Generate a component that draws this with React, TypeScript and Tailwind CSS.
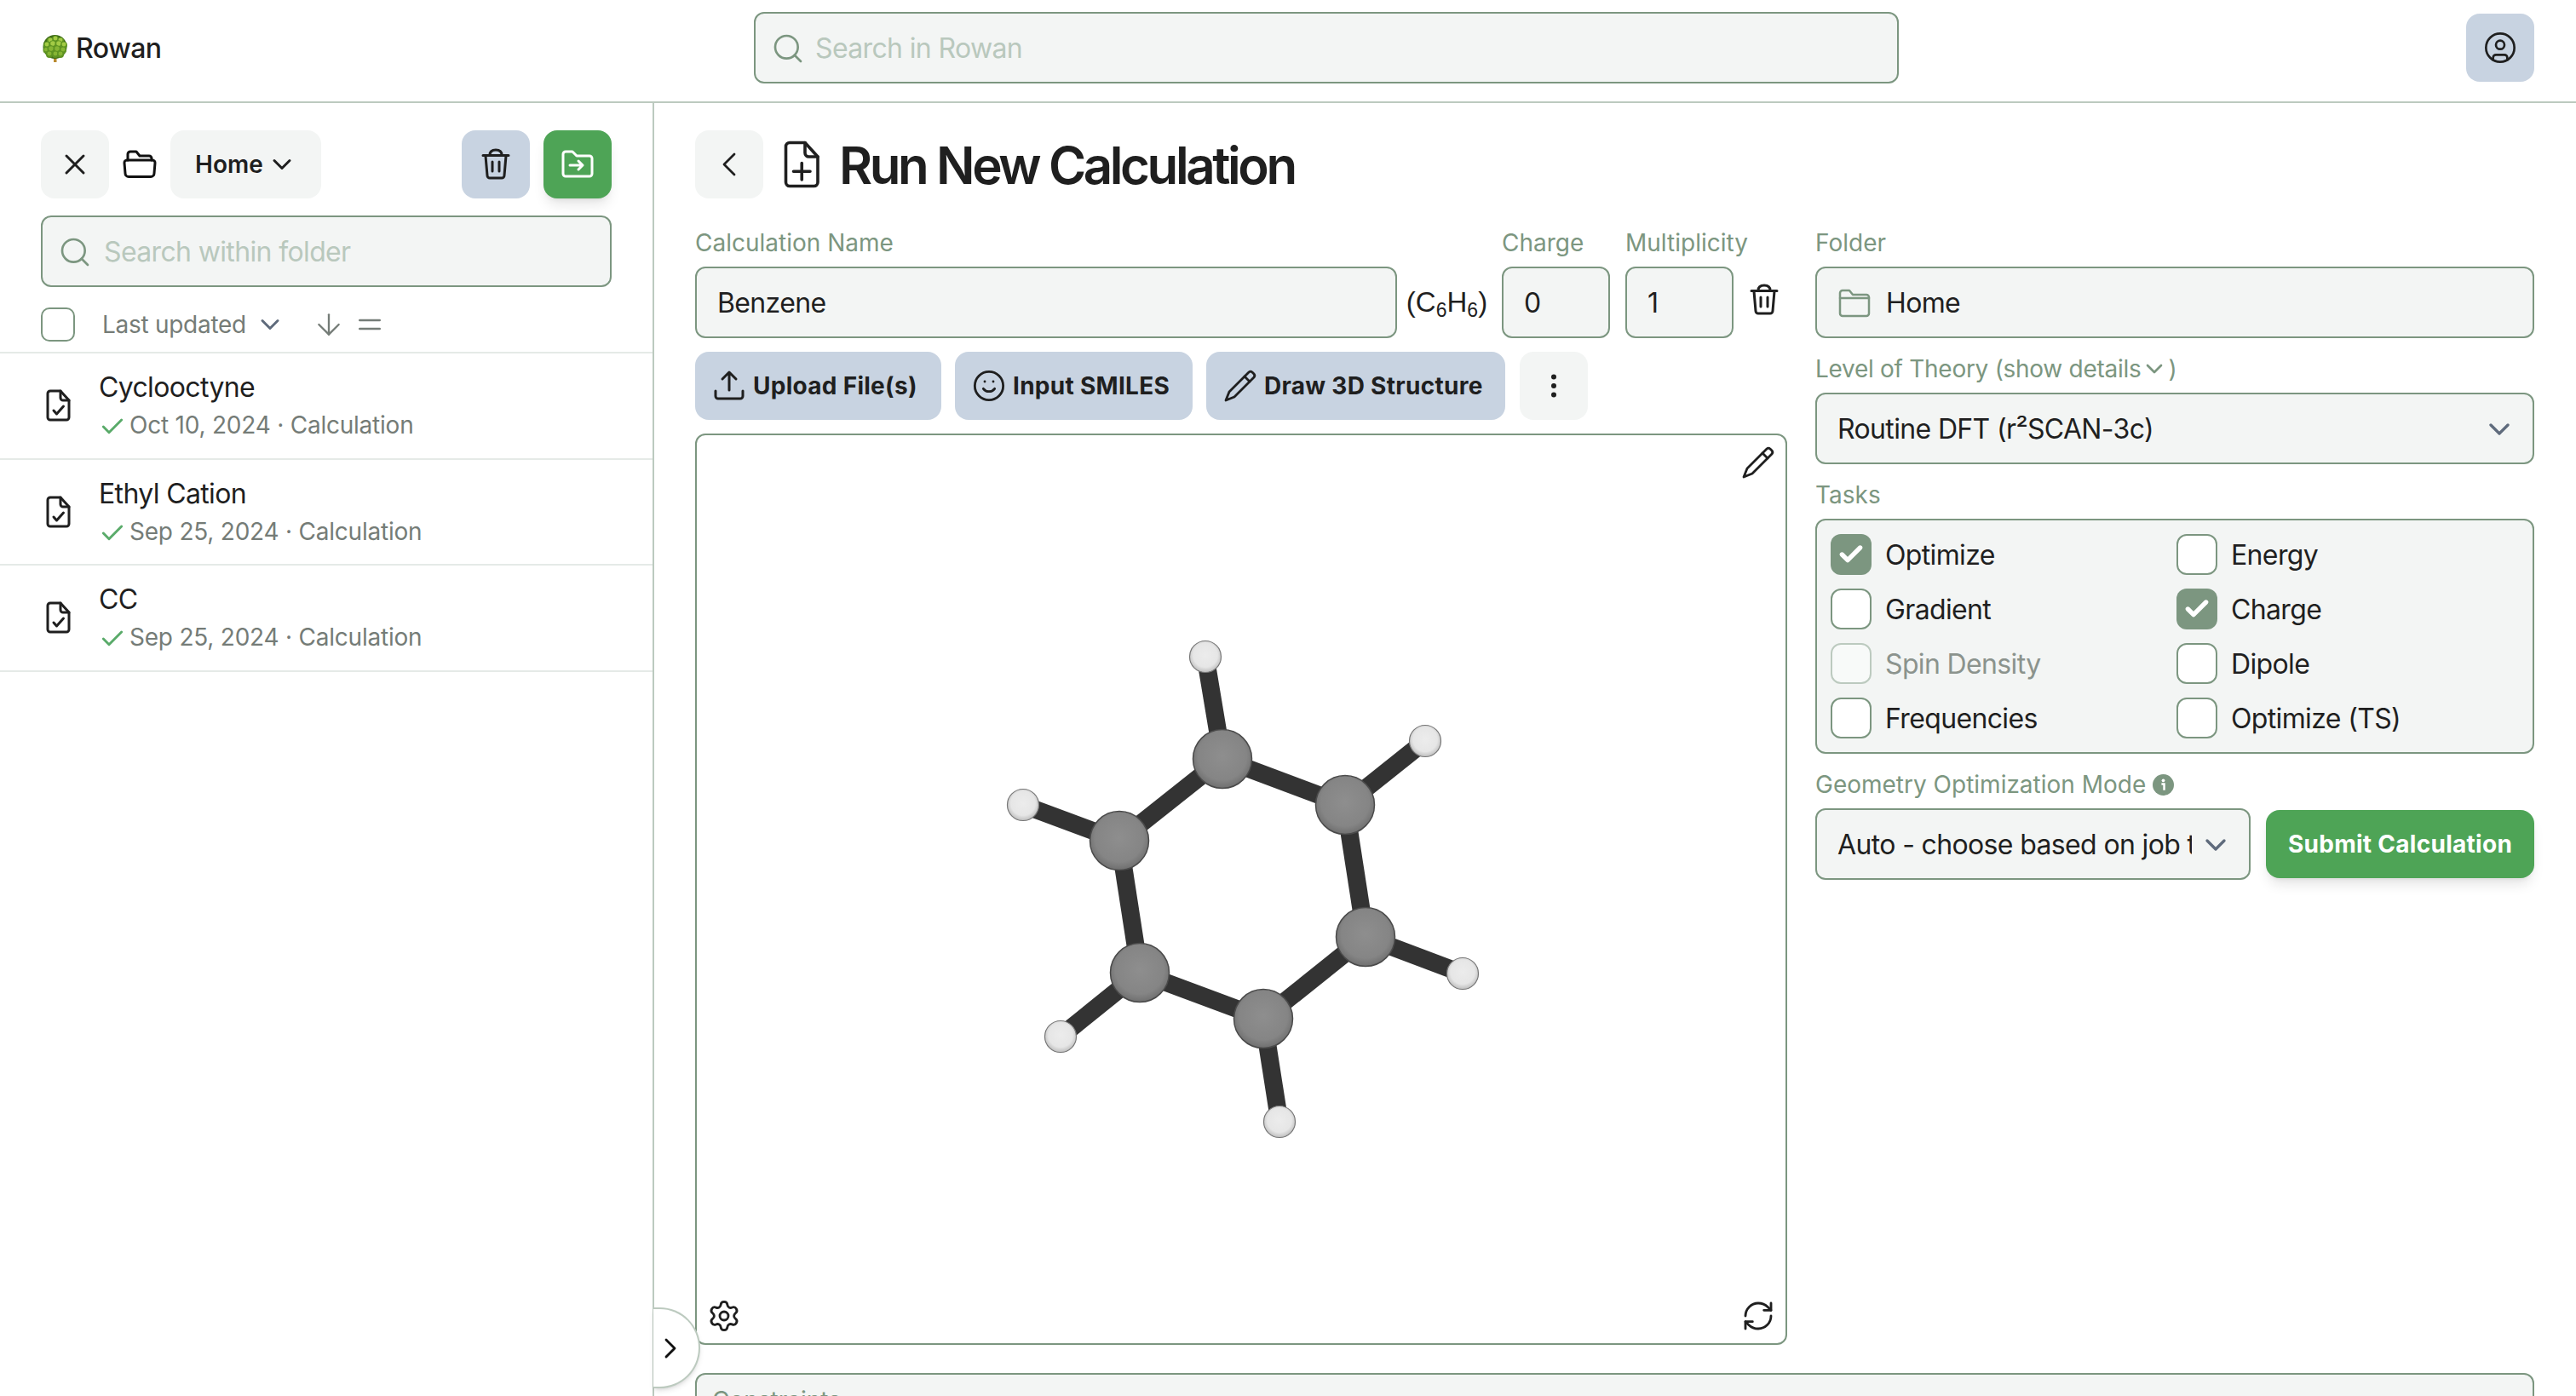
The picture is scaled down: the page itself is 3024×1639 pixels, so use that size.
import React from 'react';
import { Check, ChevronDown, ChevronLeft, ChevronRight, CircleUser, ArrowDown, Equal, EllipsisVertical, RefreshCw, Search, Settings, Smile, X } from 'lucide-react';

const TrashIcon = ({ className }: { className?: string }) => (
  <svg viewBox="0 0 40 40" fill="none" stroke="currentColor" strokeWidth="3" strokeLinecap="round" strokeLinejoin="round" className={className}>
    <path d="M5 9.5H35M13 9C13 4.5 16 3 20 3C24 3 27 4.5 27 9M8 10L10 33a3 3 0 0 0 3 3H27a3 3 0 0 0 3-3L32 10M16 17v11M24 17v11" />
  </svg>
);

const FolderOpenIcon = ({ className }: { className?: string }) => (
  <svg viewBox="0 0 40 40" fill="none" stroke="currentColor" strokeWidth="3" strokeLinecap="round" strokeLinejoin="round" className={className}>
    <path d="M6 15V8a3 3 0 0 1 3-3h7l4 5h11a3 3 0 0 1 3 3v2" />
    <path d="M5 15h30a3 3 0 0 1 3 3.4l-1 12a4 4 0 0 1-4 4H7a4 4 0 0 1-4-4l-1-12a3 3 0 0 1 3-3.4z" />
  </svg>
);

const FolderMoveIcon = ({ className }: { className?: string }) => (
  <svg viewBox="0 0 40 40" fill="none" stroke="currentColor" strokeWidth="3" strokeLinecap="round" strokeLinejoin="round" className={className}>
    <path d="M6 5h8l5 5h15a3 3 0 0 1 3 3v18a3 3 0 0 1-3 3H6a3 3 0 0 1-3-3V8a3 3 0 0 1 3-3z" />
    <path d="M11 21H26M21 16l5 5-5 5" />
  </svg>
);

const FolderIcon = ({ className }: { className?: string }) => (
  <svg viewBox="0 0 40 40" fill="none" stroke="currentColor" strokeWidth="2.5" strokeLinecap="round" strokeLinejoin="round" className={className}>
    <path d="M6 5h8l4 5h16a3 3 0 0 1 3 3v19a3 3 0 0 1-3 3H6a3 3 0 0 1-3-3V8a3 3 0 0 1 3-3z" />
    <path d="M3 14h34" />
  </svg>
);

const UploadIcon = ({ className }: { className?: string }) => (
  <svg viewBox="0 0 40 40" fill="none" stroke="currentColor" strokeWidth="3" strokeLinecap="round" strokeLinejoin="round" className={className}>
    <path d="M20 25V5M12 12l8-8 8 8M4 26v6a3 3 0 0 0 3 3h26a3 3 0 0 0 3-3v-6" />
  </svg>
);

const PencilIcon = ({ className }: { className?: string }) => (
  <svg viewBox="0 0 40 40" fill="none" stroke="currentColor" strokeWidth="2.8" strokeLinecap="round" strokeLinejoin="round" className={className}>
    <path d="M30 4a3 3 0 0 1 4 0l2 2a3 3 0 0 1 0 4L13 33 3 37l4-10z" />
    <path d="M25 9l6 6" />
  </svg>
);

const FileIcon = ({ className, strokeWidth = 3, children }: { className?: string; strokeWidth?: number; children: React.ReactNode }) => (
  <svg viewBox="0 0 40 40" fill="none" stroke="currentColor" strokeWidth={strokeWidth} strokeLinecap="round" strokeLinejoin="round" className={className}>
    <path d="M10 3h12l10 11v20a3 3 0 0 1-3 3H10a3 3 0 0 1-3-3V6a3 3 0 0 1 3-3z" />
    <path d="M22 3v8a3 3 0 0 0 3 3h7" />
    {children}
  </svg>
);

const InfoIcon = () => (
  <svg viewBox="0 0 24 24" className="h-[25px] w-[25px]">
    <circle cx="12" cy="12" r="12" fill="#7c9680" />
    <circle cx="12" cy="7" r="1.8" fill="#fff" />
    <path d="M10 11h3v7" fill="none" stroke="#fff" strokeWidth="2.4" />
  </svg>
);

const TreeLogo = () => {
  const leaves = [
    [15, 5, 4], [9, 7, 4], [21, 7, 4], [5, 12, 4], [12, 11, 4.5], [19, 11, 4.5], [25, 12, 4],
    [4, 18, 3.5], [10, 17, 4.5], [17, 17, 4.5], [24, 18, 4], [8, 23, 4], [15, 23, 4], [21, 23, 4],
  ];
  return (
    <svg viewBox="0 0 29 32" className="h-[32px] w-[29px]">
      <rect x="13" y="26" width="3.5" height="6" fill="#b98a2f" />
      <circle cx="14.5" cy="14" r="14" fill="#3f6d17" />
      {leaves.map(([cx, cy, r], i) => (
        <g key={i}>
          <circle cx={cx} cy={cy} r={r} fill="#5f9422" />
          <circle cx={cx} cy={cy - 0.9} r={r * 0.62} fill={cy < 14 ? '#a3cb45' : '#86b534'} />
        </g>
      ))}
    </svg>
  );
};

const carbons = [
  [1434, 891], [1578, 945], [1602, 1100], [1482, 1196], [1337, 1142], [1313, 987],
];
const hydrogens = [
  [1414, 771], [1672, 870], [1716, 1143], [1501, 1317], [1244, 1217], [1200, 945],
];

const Molecule = () => (
  <svg viewBox="1166 734 580 620" className="h-[620px] w-[580px]">
    <defs>
      <radialGradient id="carbon" cx="50%" cy="45%" r="55%">
        <stop offset="0%" stopColor="#8e8e8e" />
        <stop offset="75%" stopColor="#858585" />
        <stop offset="100%" stopColor="#6f6f6f" />
      </radialGradient>
      <radialGradient id="hydrogen" cx="50%" cy="45%" r="55%">
        <stop offset="0%" stopColor="#ececec" />
        <stop offset="70%" stopColor="#e6e6e6" />
        <stop offset="100%" stopColor="#bdbdbd" />
      </radialGradient>
    </defs>
    {carbons.map(([x, y], i) => {
      const [nx, ny] = carbons[(i + 1) % 6];
      const [hx, hy] = hydrogens[i];
      return (
        <g key={i} stroke="#333333" strokeWidth="21">
          <line x1={x} y1={y} x2={nx} y2={ny} />
          <line x1={x} y1={y} x2={hx} y2={hy} />
        </g>
      );
    })}
    {carbons.map(([x, y], i) => (
      <circle key={i} cx={x} cy={y} r="34.5" fill="url(#carbon)" stroke="#4a4a4a" strokeWidth="1.5" />
    ))}
    {hydrogens.map(([x, y], i) => (
      <circle key={i} cx={x} cy={y} r="18.5" fill="url(#hydrogen)" stroke="#777777" strokeWidth="1.2" />
    ))}
  </svg>
);

const Label = ({ children }: { children: React.ReactNode }) => (
  <div className="mb-2 flex h-10 items-center text-[28px] text-[#7c9680]">{children}</div>
);

const Field = ({ children, className = '' }: { children: React.ReactNode; className?: string }) => (
  <div className={`flex h-[84px] items-center rounded-xl border-2 border-[#7c9680] bg-[#f3f5f4] pt-[2px] text-[32px] tracking-[-0.02em] text-[#1f1f1f] ${className}`}>
    {children}
  </div>
);

const Task = ({ label, checked, disabled }: { label: string; checked?: boolean; disabled?: boolean }) => (
  <div className="flex h-12 items-center gap-4">
    {checked ? (
      <span className="flex h-12 w-12 items-center justify-center rounded-xl bg-[#7c9680]">
        <Check className="h-8 w-8 text-white" strokeWidth={4} />
      </span>
    ) : (
      <span className={`h-12 w-12 rounded-xl border-2 ${disabled ? 'border-[#bccabf] bg-[#f8faf9]' : 'border-[#7c9680] bg-white'}`} />
    )}
    <span className={`pt-[2px] text-[32px] tracking-[-0.02em] ${disabled ? 'text-[#8b938d]' : 'text-[#1f1f1f]'}`}>{label}</span>
  </div>
);

const BlueButton = ({ icon, text, className }: { icon: React.ReactNode; text: string; className: string }) => (
  <div className={`flex h-20 items-center gap-2 rounded-2xl bg-[#c8d3e1] pl-5 text-[28px] font-bold tracking-[0.01em] text-[#1f1f1f] ${className}`}>
    {icon}
    <span>{text}</span>
  </div>
);

const FileRow = ({ name, meta }: { name: string; meta: string }) => (
  <div className="flex h-[124.5px] items-center gap-[27px] border-b-2 border-[#e5eae7] pl-[49px]">
    <FileIcon className="h-10 w-10 text-[#1f1f1f]">
      <path d="M14 26l3.5 4 8-9" />
    </FileIcon>
    <div>
      <div className="text-[32px] leading-[44px] tracking-[-0.02em] text-[#1f1f1f]">{name}</div>
      <div className="mt-[2px] flex h-10 items-center gap-1 text-[28px] tracking-[-0.008em] text-[#757c77]">
        <Check className="mt-1 h-8 w-8 text-[#5aab6a]" strokeWidth={2.2} />
        <span>{meta}</span>
      </div>
    </div>
  </div>
);

const Sidebar = () => (
  <aside className="w-[768px] shrink-0 border-r-2 border-[#bccabf]">
    <div className="px-[48px] pt-8">
      <div className="flex items-center">
        <div className="flex h-20 w-20 items-center justify-center rounded-2xl bg-[#f3f5f4]">
          <X className="h-10 w-10 text-[#1f1f1f]" strokeWidth={1.8} />
        </div>
        <FolderOpenIcon className="ml-4 h-10 w-10 text-[#111]" />
        <div className="ml-4 flex h-20 w-[177px] items-center gap-1 rounded-2xl bg-[#f3f5f4] pl-[29px] text-[28px] font-semibold text-[#1f1f1f]">
          Home
          <ChevronDown className="h-9 w-9" strokeWidth={2} />
        </div>
        <div className="ml-auto flex h-20 w-20 items-center justify-center rounded-2xl bg-[#c8d3e1]">
          <TrashIcon className="h-10 w-10 text-[#1f1f1f]" />
        </div>
        <div className="ml-4 flex h-20 w-20 items-center justify-center rounded-2xl bg-[#4ea456] shadow-lg">
          <FolderMoveIcon className="h-10 w-10 text-white" />
        </div>
      </div>
      <Field className="mt-5 gap-[14px] pl-[18px]">
        <Search className="h-10 w-10 text-[#7c9680]" strokeWidth={1.6} />
        <span className="text-[#b9c8bd]">Search within folder</span>
      </Field>
      <div className="mt-6 flex h-10 items-center text-[#757c77]">
        <span className="h-10 w-10 rounded-[10px] border-2 border-[#7c9680]" />
        <span className="ml-8 text-[28px] tracking-[-0.01em]">Last updated</span>
        <ChevronDown className="ml-[10px] h-9 w-9 text-[#5f6b7c]" strokeWidth={2} />
        <ArrowDown className="ml-[31px] h-10 w-10" strokeWidth={1.4} />
        <Equal className="ml-2 h-10 w-10" strokeWidth={1.6} />
      </div>
    </div>
    <div className="mt-3 border-t-2 border-[#e5eae7]">
      <FileRow name="Cyclooctyne" meta="Oct 10, 2024 · Calculation" />
      <FileRow name="Ethyl Cation" meta="Sep 25, 2024 · Calculation" />
      <FileRow name="CC" meta="Sep 25, 2024 · Calculation" />
    </div>
  </aside>
);

export default function App() {
  return (
    <div className="relative h-screen overflow-hidden bg-white font-['Inter',sans-serif]">
      <header className="flex h-[121px] items-center border-b-2 border-[#bccabf] pb-2 pl-[50px] pr-[49px]">
        <div className="mt-[2px] flex w-[835px] items-center gap-[10px] text-[32px] font-medium tracking-[-0.015em] text-[#1f1f1f]">
          <TreeLogo />
          Rowan
        </div>
        <Field className="w-[1344px] gap-3 pl-[18px]">
          <Search className="h-10 w-10 text-[#7c9680]" strokeWidth={1.6} />
          <span className="text-[#b9c8bd]">Search in Rowan</span>
        </Field>
        <div className="ml-auto flex h-20 w-20 items-center justify-center rounded-2xl bg-[#c8d3e1]">
          <CircleUser className="h-10 w-10 text-[#1f1f1f]" strokeWidth={1.6} />
        </div>
      </header>

      <div className="flex">
        <Sidebar />
        <main className="min-w-0 flex-1 pl-[48px] pr-[49px] pt-8">
          <div className="flex h-20 items-center">
            <div className="flex h-20 w-20 items-center justify-center rounded-2xl bg-[#f3f5f4]">
              <ChevronLeft className="h-12 w-12 text-[#1f1f1f]" strokeWidth={1.4} />
            </div>
            <FileIcon className="ml-[16px] h-[60px] w-[60px] text-[#1f1f1f]" strokeWidth={2.4}>
              <path d="M19.5 19v13M13 25.5h13" />
            </FileIcon>
            <h1 className="ml-[13px] pt-[2px] text-[60px] font-semibold tracking-[-0.057em] text-[#1f1f1f]">Run New Calculation</h1>
          </div>

          <div className="mt-8 flex gap-[33px]">
            <div className="w-[1282px] shrink-0">
              <div className="flex items-end">
                <div className="w-[824px]">
                  <Label>Calculation Name</Label>
                  <Field className="pl-[24px]">Benzene</Field>
                </div>
                <div className="flex h-[84px] w-[123px] items-center justify-center pr-[6px] font-['Liberation_Sans',sans-serif] text-[33px] text-[#1f1f1f]">
                  <span>
                    (C<sub className="text-[23px]">6</sub>H<sub className="text-[23px]">6</sub>)
                  </span>
                </div>
                <div className="w-[127px]">
                  <Label>Charge</Label>
                  <Field className="pl-[24px]">0</Field>
                </div>
                <div className="ml-[18px] w-[127px]">
                  <Label>Multiplicity</Label>
                  <Field className="pl-[24px]">1</Field>
                </div>
                <div className="ml-4 flex h-[84px] items-center pb-[6px]">
                  <TrashIcon className="h-10 w-10 text-[#1f1f1f]" />
                </div>
              </div>

              <div className="mt-4 flex gap-4">
                <BlueButton icon={<UploadIcon className="h-10 w-10" />} text="Upload File(s)" className="w-[289px]" />
                <BlueButton icon={<Smile className="h-10 w-10" strokeWidth={1.7} />} text="Input SMILES" className="w-[279px]" />
                <BlueButton icon={<PencilIcon className="h-10 w-10" />} text="Draw 3D Structure" className="w-[351px]" />
                <div className="ml-px flex h-20 w-20 items-center justify-center rounded-2xl bg-[#f3f5f4]">
                  <EllipsisVertical className="h-9 w-9 text-[#1f1f1f]" strokeWidth={2} />
                </div>
              </div>

              <div className="relative mt-4 flex h-[1070px] items-center justify-center rounded-xl border-2 border-[#7c9680] bg-white">
                <Molecule />
                <PencilIcon className="absolute right-[12px] top-[12px] h-10 w-10 text-[#1f1f1f]" />
                <Settings className="absolute bottom-[12px] left-[12px] h-10 w-10 text-[#1f1f1f]" strokeWidth={1.7} />
                <RefreshCw className="absolute bottom-[12px] right-[12px] h-10 w-10 text-[#1f1f1f]" strokeWidth={1.7} />
              </div>
            </div>

            <div className="flex-1">
              <Label>Folder</Label>
              <Field className="gap-[17px] pl-[24px]">
                <FolderIcon className="h-10 w-10 text-[#7c9680]" />
                Home
              </Field>

              <div className="mt-4">
                <Label>
                  <span className="tracking-[-0.01em]">Level of Theory (show details</span>
                  <ChevronDown className="h-8 w-8" strokeWidth={2} />)
                </Label>
              </div>
              <Field className="justify-between pl-[24px] pr-[19px]">
                Routine DFT (r²SCAN-3c)
                <ChevronDown className="h-10 w-10 text-[#5f6b7c]" strokeWidth={2} />
              </Field>

              <div className="mt-4">
                <Label>Tasks</Label>
              </div>
              <div className="grid grid-cols-[406px_1fr] gap-y-4 rounded-xl border-2 border-[#7c9680] bg-[#f3f5f4] p-4">
                <Task label="Optimize" checked />
                <Task label="Energy" />
                <Task label="Gradient" />
                <Task label="Charge" checked />
                <Task label="Spin Density" disabled />
                <Task label="Dipole" />
                <Task label="Frequencies" />
                <Task label="Optimize (TS)" />
              </div>

              <div className="mt-4">
                <Label>
                  Geometry Optimization Mode
                  <span className="ml-2 flex"><InfoIcon /></span>
                </Label>
              </div>
              <div className="flex items-center gap-[18px]">
                <Field className="w-[511px] justify-between pl-[24px] pr-[19px]">
                  <span className="w-[416px] overflow-hidden whitespace-nowrap">Auto - choose based on job type</span>
                  <ChevronDown className="h-10 w-10 text-[#5f6b7c]" strokeWidth={2} />
                </Field>
                <div className="flex h-20 flex-1 items-center justify-center rounded-2xl bg-[#4ea456] text-[28px] font-bold tracking-[0.01em] text-white shadow-lg">
                  Submit Calculation
                </div>
              </div>
            </div>
          </div>

          <div className="mt-[33px] h-[200px] rounded-xl border-2 border-[#7c9680] bg-[#f3f5f4] pl-[18px] pt-[10px] text-[28px] leading-10 text-[#7c9680]">
            Constraints
          </div>
        </main>
      </div>

      <div className="absolute left-[767px] top-[1535px] flex h-[95px] w-[55px] items-center rounded-r-full border-2 border-l-0 border-[#bccabf] bg-white shadow-md">
        <ChevronRight className="h-10 w-10 text-[#111]" strokeWidth={1.7} />
      </div>
    </div>
  );
}
